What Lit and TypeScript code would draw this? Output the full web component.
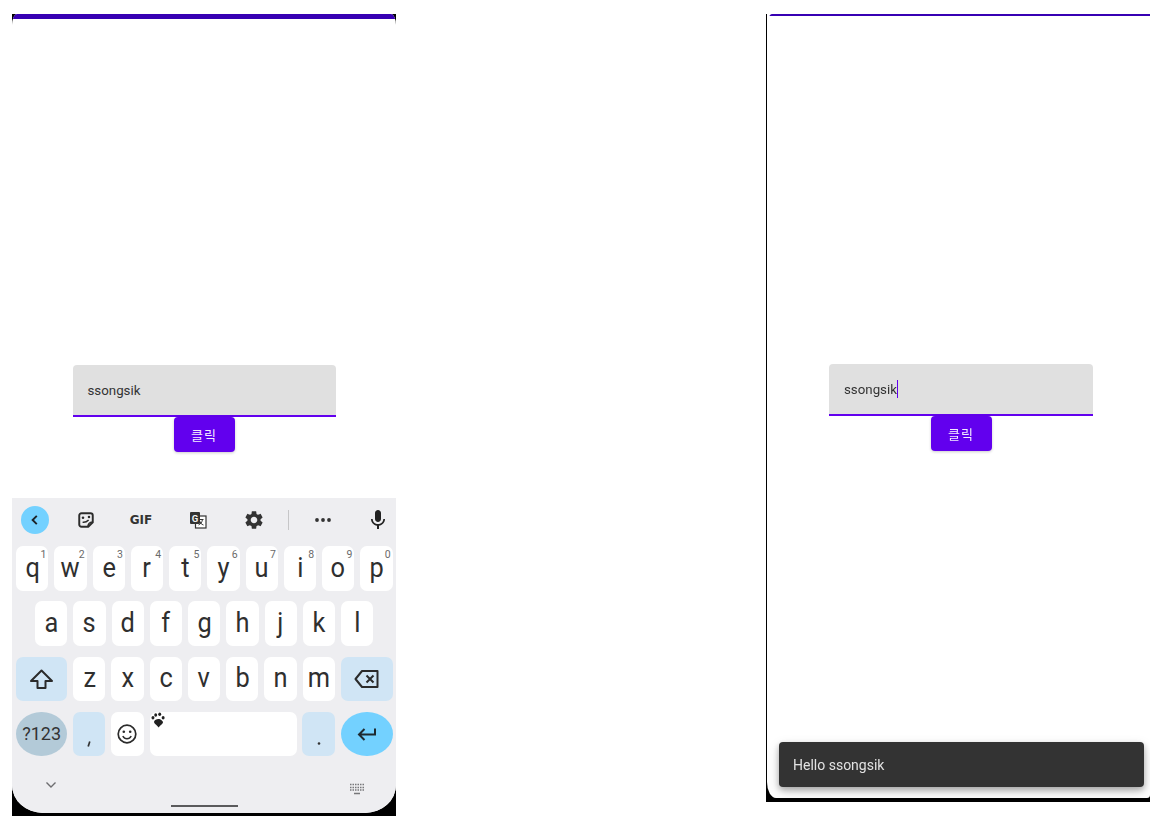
import { LitElement, html, css, svg } from "lit";
import { customElement } from "lit/decorators.js";

const R1 = ["q", "w", "e", "r", "t", "y", "u", "i", "o", "p"];
const R2 = ["a", "s", "d", "f", "g", "h", "j", "k", "l"];
const R3 = ["z", "x", "c", "v", "b", "n", "m"];
const NUMS = ["1", "2", "3", "4", "5", "6", "7", "8", "9", "0"];

const GEAR = "M19.14 12.94c.04-.3.06-.61.06-.94 0-.32-.02-.64-.07-.94l2.03-1.58c.18-.14.23-.41.12-.61l-1.92-3.32c-.12-.22-.37-.29-.59-.22l-2.39.96c-.5-.38-1.03-.7-1.62-.94l-.36-2.54c-.04-.24-.24-.41-.48-.41h-3.84c-.24 0-.43.17-.47.41l-.36 2.54c-.59.24-1.13.57-1.62.94l-2.39-.96c-.22-.08-.47 0-.59.22L2.74 8.87c-.12.21-.08.47.12.61l2.03 1.58c-.05.3-.09.63-.09.94s.02.64.07.94l-2.03 1.58c-.18.14-.23.41-.12.61l1.92 3.32c.12.22.37.29.59.22l2.39-.96c.5.38 1.03.7 1.62.94l.36 2.54c.05.24.24.41.48.41h3.84c.24 0 .44-.17.47-.41l.36-2.54c.59-.24 1.13-.56 1.62-.94l2.39.96c.22.08.47 0 .59-.22l1.92-3.32c.12-.22.07-.47-.12-.61l-2.01-1.58zM12 15.6c-1.98 0-3.6-1.62-3.6-3.6s1.62-3.6 3.6-3.6 3.6 1.62 3.6 3.6-1.62 3.6-3.6 3.6z";
const MIC = "M12 14c1.66 0 3-1.34 3-3V5c0-1.66-1.34-3-3-3S9 3.34 9 5v6c0 1.66 1.34 3 3 3zm5.3-3c0 3-2.54 5.1-5.3 5.1S6.7 14 6.7 11H5c0 3.41 2.72 6.23 6 6.72V21h2v-3.28c3.28-.48 6-3.3 6-6.72h-1.7z";

const icon = (size: number, body: unknown) => html`<svg width=${size} height=${size} viewBox="0 0 24 24">${body}</svg>`;

@customElement("app-root")
export class AppRoot extends LitElement {
  static styles = css`
    :host {
      display: block;
      width: 1156px;
      height: 824px;
      background: #fff;
      font-family: Roboto, "Noto Sans CJK KR", sans-serif;
      overflow: hidden;
    }
    .page {
      display: flex;
      justify-content: space-between;
      align-items: flex-start;
      box-sizing: border-box;
      width: 1156px;
      padding: 14px 6px 0 12px;
      filter: blur(0.5px);
    }
    .phone {
      width: 384px;
      background: #000;
      box-sizing: border-box;
    }
    .phone.left {
      height: 802px;
      padding-bottom: 3px;
    }
    .phone.right {
      height: 788px;
      padding: 0 0 4px 1px;
      background: linear-gradient(#000, #000) left / 1px 100% no-repeat, linear-gradient(#000, #000) bottom / 100% 30px no-repeat;
    }
    .screen {
      height: 100%;
      display: flex;
      flex-direction: column;
      background: #fff;
      overflow: hidden;
    }
    .left .screen {
      border-radius: 5px 5px 31px 31px / 11px 11px 28px 28px;
    }
    .right .screen {
      position: relative;
      border-radius: 5px 0 3px 9px / 13px 0 3px 16px;
    }
    .bar {
      flex: none;
      background: #3700b3;
    }
    .left .bar { height: 5px; }
    .right .bar { height: 2px; }
    .main {
      flex: 1;
      display: flex;
      flex-direction: column;
      align-items: center;
    }
    .left .main { padding-top: 346px; }
    .right .main { padding: 348px 0 0 5px; }
    .field {
      width: 263px;
      height: 52px;
      box-sizing: border-box;
      background: #e0e0e0;
      border-bottom: 2px solid #6200ee;
      border-radius: 4px 4px 0 0;
      padding-left: 15px;
      display: flex;
      align-items: center;
      font-size: 13.3px;
      color: #333;
    }
    .right .field {
      width: 264px;
    }
    .caret {
      width: 1.5px;
      height: 18px;
      background: #6200ee;
    }
    .btn {
      width: 61px;
      height: 35px;
      box-sizing: border-box;
      padding-bottom: 1px;
      background: #6200ee;
      color: #f3ecff;
      border-radius: 4px;
      display: flex;
      align-items: center;
      justify-content: center;
      font-size: 13px;
      letter-spacing: 1px;
      box-shadow: 0 1px 3px rgba(0, 0, 0, 0.2);
    }
    .snack {
      position: absolute;
      left: 11.5px;
      right: 6.5px;
      bottom: 11px;
      height: 45px;
      box-sizing: border-box;
      padding-left: 14.5px;
      display: flex;
      align-items: center;
      background: #333;
      color: #e2e2e2;
      font-size: 14px;
      border-radius: 4px;
      box-shadow: 0 3px 6px rgba(0, 0, 0, 0.28), 0 5px 14px rgba(0, 0, 0, 0.14);
    }
    .kb {
      flex: none;
      height: 315px;
      background: #eeeef1;
      display: flex;
      flex-direction: column;
    }
    .tools {
      height: 43px;
      margin-bottom: 5px;
      flex: none;
      display: grid;
      grid-template-columns: 45px 58px 52px 62px 50px 18px 52px 47px;
      align-items: center;
      justify-items: center;
    }
    .tools svg { display: block; }
    .tools .mic { justify-self: end; margin-right: 6px; }
    .back {
      width: 28px;
      height: 28px;
      border-radius: 50%;
      background: #73d1ff;
      display: flex;
      align-items: center;
      justify-content: center;
    }
    .gif {
      font: 800 12px "DejaVu Sans", sans-serif;
      color: #333;
    }
    .div {
      width: 1px;
      height: 20px;
      background: #c6c6c8;
    }
    .rows {
      display: flex;
      flex-direction: column;
      gap: 10.7px;
      padding: 0 3px 0 4px;
    }
    .row {
      display: flex;
      gap: 5.86px;
      height: 44.6px;
    }
    .row.mid { padding-left: 19px; }
    .key {
      position: relative;
      flex: none;
      width: 32.4px;
      height: 100%;
      background: #fff;
      border-radius: 7px;
      display: flex;
      align-items: center;
      justify-content: center;
      color: #2f2f2f;
      font-size: 27px;
      line-height: 1;
    }
    .key .l {
      display: block;
      transform: scaleX(0.94);
    }
    .key sup {
      position: absolute;
      top: 3.5px;
      right: 2px;
      font-size: 10.5px;
      line-height: 1;
      color: #6a6a6a;
    }
    .key.wide { width: 51.2px; }
    .key.wide.end { width: 52px; }
    .key.tint { background: #d0e5f5; }
    .key.sym { background: #b3cad8; border-radius: 50% / 50%; font-size: 18px; color: #333; }
    .key.ent { background: #73d1ff; border-radius: 50% / 50%; }
    .key.space { width: 147px; }
    .key.space svg { position: absolute; left: 0; top: 0; }
    .key.p {
      align-items: flex-end;
      box-sizing: border-box;
      padding-bottom: 9px;
    }
    .key.p.dot { padding-bottom: 10px; }
    .foot {
      flex: 1;
      position: relative;
    }
    .foot .chev { position: absolute; left: 32px; top: 24px; }
    .foot .mini { position: absolute; left: 337px; top: 27px; }
    .home {
      position: absolute;
      left: 159px;
      bottom: 6px;
      width: 67px;
      height: 2px;
      background: #5a5a5c;
    }
  `;

  private toolbar() {
    return html`<div class="tools">
      <div class="back">
        <svg width="14" height="14" viewBox="0 0 14 14"><path d="M8.8 2.8 4.6 7l4.2 4.2" fill="none" stroke="#1c2226" stroke-width="1.9"/></svg>
      </div>
      ${icon(18, svg`<path d="M3 6c0-1.700 1.300-3 3-3h12c1.700 0 3 1.300 3 3v9l-6 6H6c-1.700 0-3-1.300-3-3z" fill="none" stroke="#2c2c2c" stroke-width="2.600"/><path d="M14.500 21c0-4 2-6 6.500-6.500" fill="none" stroke="#2c2c2c" stroke-width="2"/><circle cx="8" cy="9" r="1.700" fill="#2c2c2c"/><circle cx="16" cy="8" r="1.700" fill="#2c2c2c"/><path d="M7.500 15c3 .5 5.500-.5 8-3" fill="none" stroke="#2c2c2c" stroke-width="2"/>`)}
      <span class="gif">GIF</span>
      <svg width="18" height="18" viewBox="0 0 18 18">
        <rect x="6.500" y="5" width="10.500" height="12" fill="#fff" stroke="#333" stroke-width="1.200"/>
        <path d="M9.500 8.500h5M13.500 8.500c-.5 3-2 4.500-4 5.500M10.500 9.500c.5 2 2 4 4 4.500" fill="none" stroke="#333" stroke-width="1"/>
        <rect x="1" y="1" width="10" height="12" rx="1" fill="#333"/>
        <text x="6" y="10.500" text-anchor="middle" font-family="Roboto, sans-serif" font-weight="700" font-size="9.500" fill="#f2f2f2">G</text>
      </svg>
      ${icon(22, svg`<path d=${GEAR} fill="#333"/>`)}
      <div class="div"></div>
      <svg width="18" height="6" viewBox="0 0 18 6"><circle cx="3" cy="3" r="1.900" fill="#333"/><circle cx="9" cy="3" r="1.900" fill="#333"/><circle cx="15" cy="3" r="1.900" fill="#333"/></svg>
      <span class="mic">${icon(24, svg`<path d=${MIC} fill="#222"/>`)}</span>
    </div>`;
  }

  private keyboard() {
    return html`<div class="kb">
      ${this.toolbar()}
      <div class="rows">
        <div class="row">
          ${R1.map((k, i) => html`<div class="key"><span class="l">${k}</span><sup>${NUMS[i]}</sup></div>`)}
        </div>
        <div class="row mid">
          ${R2.map((k) => html`<div class="key"><span class="l">${k}</span></div>`)}
        </div>
        <div class="row">
          <div class="key wide tint">
            <svg width="27" height="24" viewBox="0 0 27 24"><path d="M13.500 3.500 3 14h6.500v7h8v-7H24z" fill="none" stroke="#2b2b2b" stroke-width="2" stroke-linejoin="round"/></svg>
          </div>
          ${R3.map((k) => html`<div class="key"><span class="l">${k}</span></div>`)}
          <div class="key wide end tint">
            <svg width="26" height="22" viewBox="0 0 26 22"><path d="M8 3h15.500v16H8L1.500 11z" fill="none" stroke="#2b2b2b" stroke-width="2" stroke-linejoin="round"/><path d="m12.500 7.500 7 7M19.500 7.500l-7 7" stroke="#2b2b2b" stroke-width="2"/></svg>
          </div>
        </div>
        <div class="row">
          <div class="key wide sym">?123</div>
          <div class="key tint p">
            <svg width="6" height="6" viewBox="0 0 6 6"><path d="M3.800 .5 2.200 5.500" stroke="#333" stroke-width="1.700"/></svg>
          </div>
          <div class="key">
            <svg width="22" height="22" viewBox="0 0 22 22"><circle cx="11" cy="11" r="8.800" fill="none" stroke="#2b2b2b" stroke-width="1.700"/><circle cx="7.800" cy="8.800" r="1.300" fill="#2b2b2b"/><circle cx="14.200" cy="8.800" r="1.300" fill="#2b2b2b"/><path d="M6.800 13c1 1.900 2.500 2.800 4.200 2.800s3.200-.9 4.200-2.800" fill="none" stroke="#2b2b2b" stroke-width="1.500"/></svg>
          </div>
          <div class="key space">
            <svg width="16" height="16" viewBox="0 0 14 14"><ellipse cx="2.600" cy="5" rx="1.300" ry="1.500" fill="#222"/><ellipse cx="5" cy="2.600" rx="1.300" ry="1.500" fill="#222"/><ellipse cx="8.500" cy="2" rx="1.300" ry="1.500" fill="#222"/><ellipse cx="11.500" cy="5" rx="1.300" ry="1.500" fill="#222"/><path d="M3.500 8.500c1-2.500 5-3.500 7.500-.5 1.500 1.500-1.500 3-3.500 5.500-1-2-4-3-4-5z" fill="#222"/></svg>
          </div>
          <div class="key tint p dot">
            <svg width="4" height="10" viewBox="0 0 4 10"><circle cx="2" cy="7.500" r="1.300" fill="#333"/></svg>
          </div>
          <div class="key wide end ent">
            <svg width="20" height="16" viewBox="0 0 20 16"><path d="M18 2.500v6H2.500M7.500 3 2 8.500 7.500 14" fill="none" stroke="#1f2a30" stroke-width="2"/></svg>
          </div>
        </div>
      </div>
      <div class="foot">
        <svg class="chev" width="14" height="10" viewBox="0 0 14 10"><path d="M2.500 2.500 7 7l4.500-4.500" fill="none" stroke="#6d6d70" stroke-width="1.400"/></svg>
        <svg class="mini" width="16" height="12" viewBox="0 0 16 12">
          <path d="M1 1.500h14M1 4.500h14M1 7h14" stroke="#77777a" stroke-width="1.500" stroke-dasharray="1.500 1"/>
          <path d="M5 10.500h6" stroke="#77777a" stroke-width="1.400"/>
        </svg>
        <div class="home"></div>
      </div>
    </div>`;
  }

  private form(caret: boolean) {
    return html`<div class="main">
      <div class="field"><span>ssongsik</span>${caret ? html`<span class="caret"></span>` : ""}</div>
      <div class="btn">클릭</div>
    </div>`;
  }

  render() {
    return html`<div class="page">
      <div class="phone left">
        <div class="screen">
          <div class="bar"></div>
          ${this.form(false)}
          ${this.keyboard()}
        </div>
      </div>
      <div class="phone right">
        <div class="screen">
          <div class="bar"></div>
          ${this.form(true)}
          <div class="snack">Hello ssongsik</div>
        </div>
      </div>
    </div>`;
  }
}
